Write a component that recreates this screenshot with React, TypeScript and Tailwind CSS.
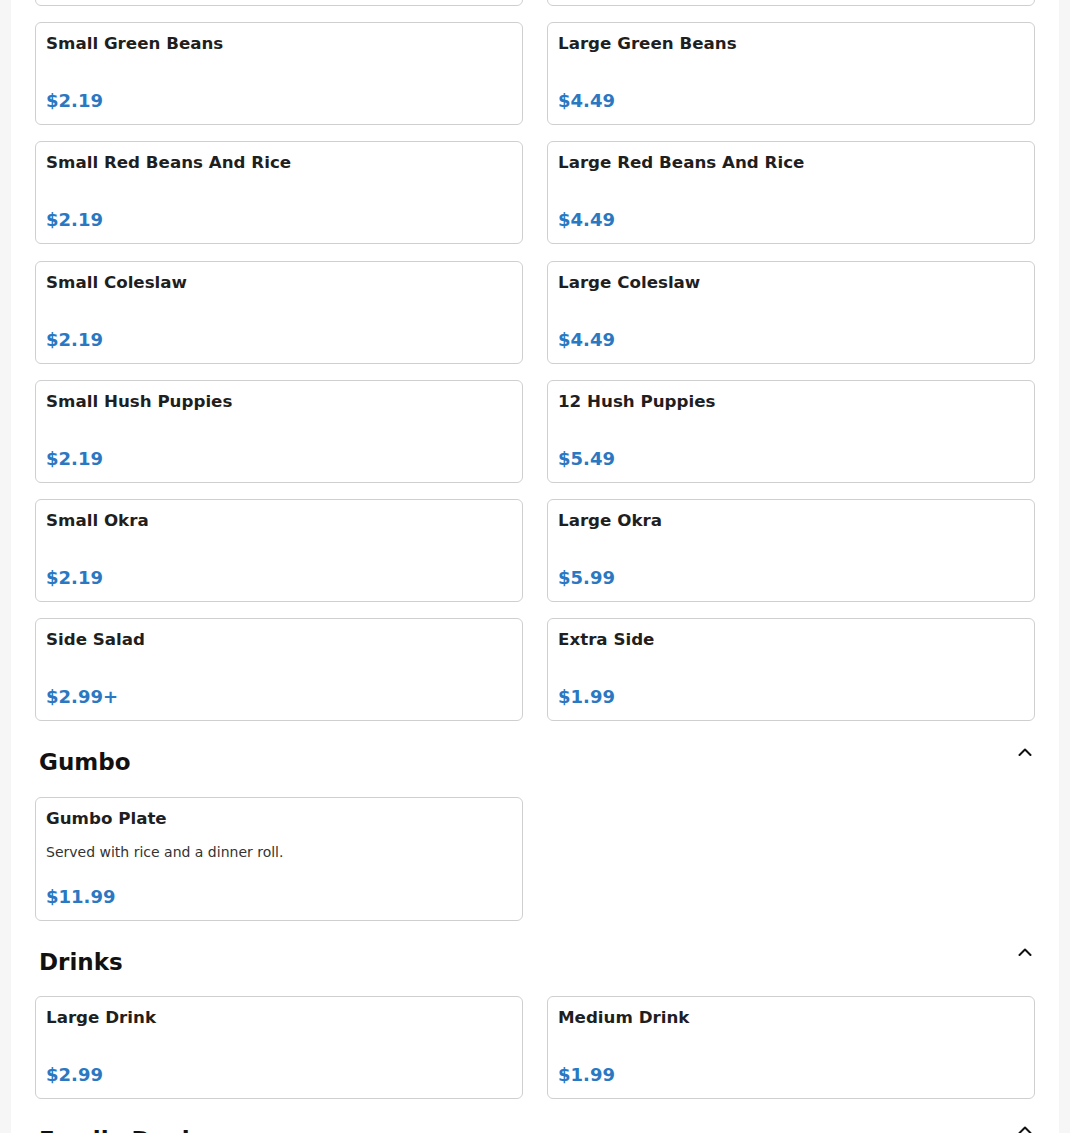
import React from 'react';

interface MenuItem {
    name: string;
    price: string;
    description?: string;
}

interface MenuSection {
    title: string;
    items: MenuItem[];
}

const sections: MenuSection[] = [
    {
        title: 'Sides',
        items: [
            { name: 'Small Mashed Potatoes', price: '$2.19' },
            { name: 'Large Mashed Potatoes', price: '$4.49' },
            { name: 'Small Green Beans', price: '$2.19' },
            { name: 'Large Green Beans', price: '$4.49' },
            { name: 'Small Red Beans And Rice', price: '$2.19' },
            { name: 'Large Red Beans And Rice', price: '$4.49' },
            { name: 'Small Coleslaw', price: '$2.19' },
            { name: 'Large Coleslaw', price: '$4.49' },
            { name: 'Small Hush Puppies', price: '$2.19' },
            { name: '12 Hush Puppies', price: '$5.49' },
            { name: 'Small Okra', price: '$2.19' },
            { name: 'Large Okra', price: '$5.99' },
            { name: 'Side Salad', price: '$2.99+' },
            { name: 'Extra Side', price: '$1.99' },
        ],
    },
    {
        title: 'Gumbo',
        items: [
            { name: 'Gumbo Plate', price: '$11.99', description: 'Served with rice and a dinner roll.' },
        ],
    },
    {
        title: 'Drinks',
        items: [
            { name: 'Large Drink', price: '$2.99' },
            { name: 'Medium Drink', price: '$1.99' },
        ],
    },
    {
        title: 'Family Deals',
        items: [
            { name: 'Family Deal 1', price: '$24.99' },
            { name: 'Family Deal 2', price: '$34.99' },
        ],
    },
];

const ChevronUp = () => (
    <svg width="14" height="8" viewBox="0 0 14 8" fill="none" className="mt-[2px] shrink-0">
        <path d="M1.5 7 L7 1.5 L12.5 7" stroke="#111" strokeWidth="2" strokeLinecap="round" strokeLinejoin="round" />
    </svg>
);

const ItemCard = ({ item }: { item: MenuItem }) => {
    return (
        <div className="flex flex-col border border-[#cfcfcf] rounded-md bg-white p-[10px]">
            <h3 className="text-[16.7px] leading-5 font-bold text-[#1f1f1f] mb-[14px]">{item.name}</h3>
            {item.description && (
                <p className="text-[14px] leading-[21px] text-[#333]">{item.description}</p>
            )}
            <span className="mt-5 text-[18px] leading-[27px] font-bold text-[#2b78c2]">{item.price}</span>
        </div>
    );
};

const Section = ({ section, first }: { section: MenuSection; first: boolean }) => {
    return (
        <section>
            {!first && (
                <div className="flex justify-between items-start pl-1 pr-[3px] pt-[25px] pb-[18.5px]">
                    <h2 className="text-[23px] leading-8 font-bold text-[#111]">{section.title}</h2>
                    <ChevronUp />
                </div>
            )}
            <div className="grid grid-cols-2 gap-x-6 gap-y-[16.2px]">
                {section.items.map((item) => (
                    <ItemCard key={item.name} item={item} />
                ))}
            </div>
        </section>
    );
};

export default function App() {
    return (
        <div className="h-[1133px] overflow-hidden bg-[#f6f6f6] font-['DejaVu_Sans',sans-serif]">
            <div className="mx-[11px] h-full bg-white px-6 overflow-hidden">
                <div className="-mt-[97px]">
                    {sections.map((section, i) => (
                        <Section key={section.title} section={section} first={i === 0} />
                    ))}
                </div>
            </div>
        </div>
    );
}
